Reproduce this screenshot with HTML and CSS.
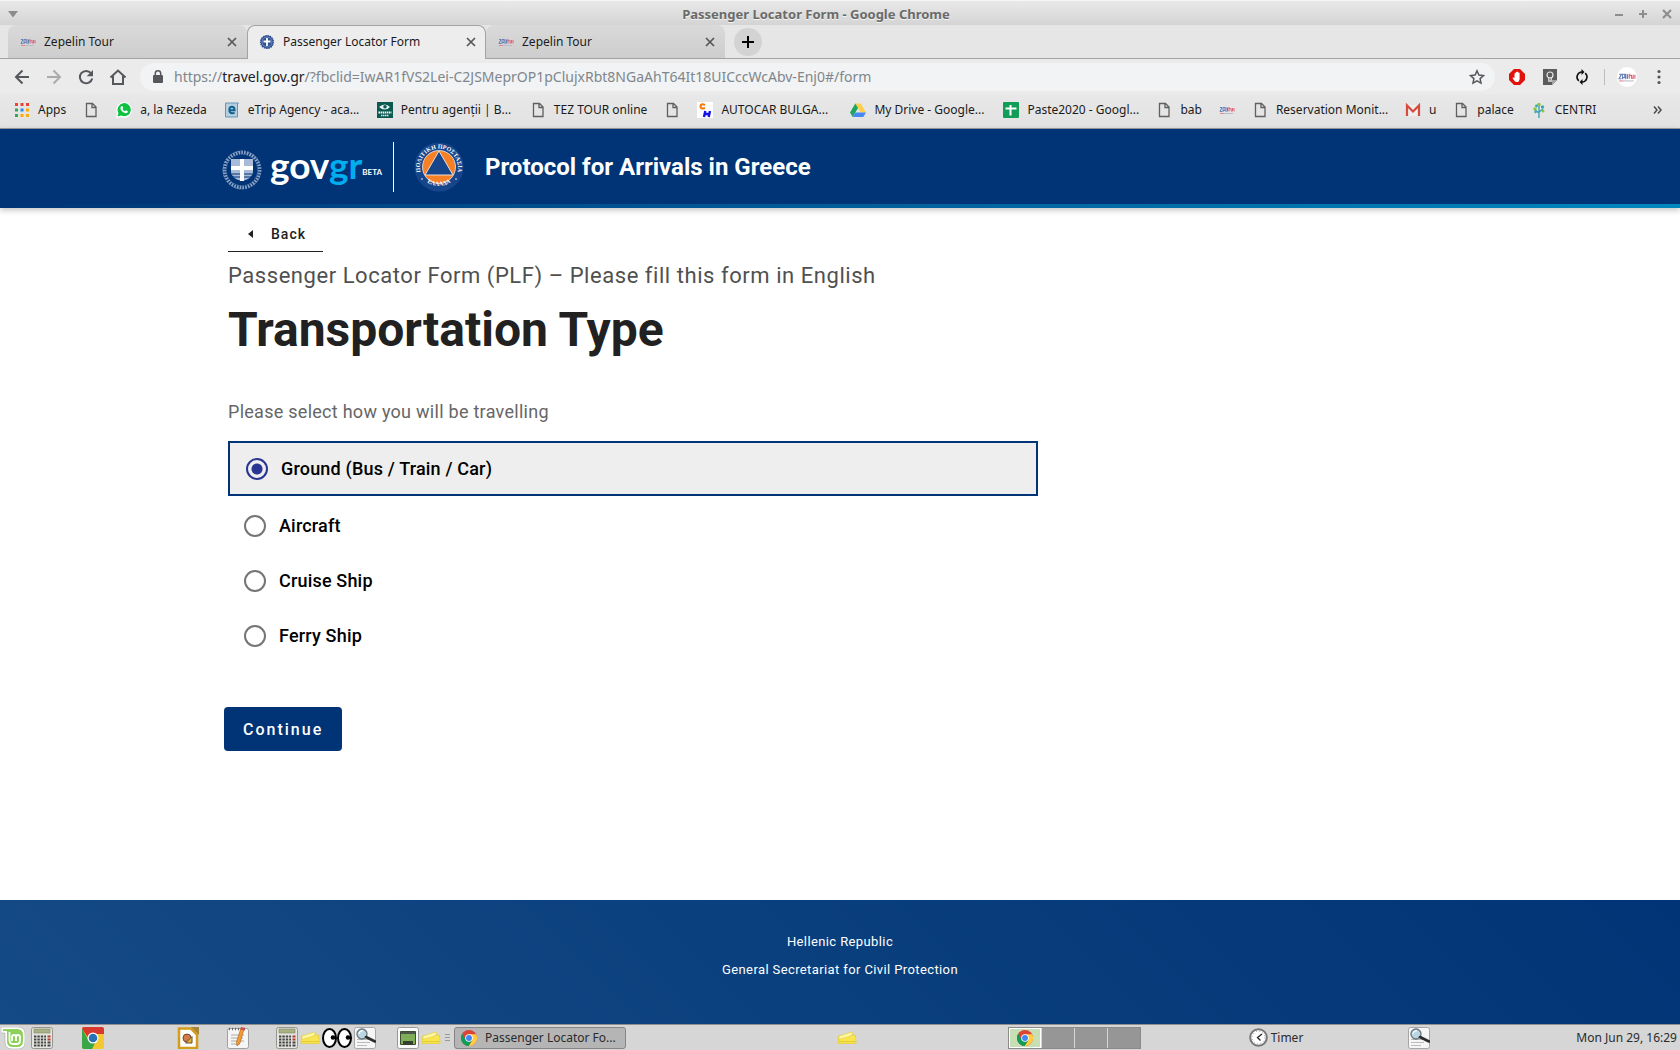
FILE: index.html
```html
<!DOCTYPE html>
<html lang="en">
<head>
    <meta charset="UTF-8">
    <meta name="viewport" content="width=device-width, initial-scale=1.0">
    <title>Passenger Locator Form</title>
    <link rel="stylesheet" href="styles.css">
</head>
<body>
    <!-- Shared icons -->
    <svg class="sprite" aria-hidden="true">
        <symbol id="i-page" viewBox="0 0 16 16"><path d="M3.5 1.5h6l3.500 3.500v9.500h-9.500zM9 1.500v4h4" fill="none" stroke="#5f5f5f" stroke-width="1.300"/></symbol>
        <symbol id="i-zepelin" viewBox="0 0 16 16">
            <path d="M1 5.500h2l-2 4h2M4 10V5.500h2v3H4M7 5v5M8.500 5.500v4" fill="none" stroke="#6780b8" stroke-width="1"/>
            <path d="M10 5v4.500M9.500 6.500h2M12 6v3h1.500V6M15 9.500V6" fill="none" stroke="#d9677b" stroke-width="1"/>
            <path d="M1 11.500h4" stroke="#e48a93"/><path d="M5 11.500h9" stroke="#b9bdc9"/>
        </symbol>
        <symbol id="i-close" viewBox="0 0 10 10"><path d="M1 1l8 8M9 1L1 9" stroke="#565656" stroke-width="1.700"/></symbol>
        <symbol id="i-chrome" viewBox="0 0 20 20">
            <circle cx="10" cy="10" r="10" fill="#db4437"/>
            <path d="M10 5.300h8.800A10 10 0 0 1 9.500 20l4.600-7.600z" fill="#ffcd40"/>
            <path d="M1.500 4.700A10 10 0 0 0 9.500 20l4.600-7.600-8.200 0z" fill="#0f9d58"/>
            <circle cx="10" cy="10" r="4.700" fill="#fff"/><circle cx="10" cy="10" r="3.700" fill="#4285f4"/>
        </symbol>
        <symbol id="i-calc" viewBox="0 0 22 22">
            <rect x=".5" y=".5" width="21" height="21" rx="2" fill="#e4e4e0" stroke="#96968f"/>
            <rect x="3" y="2" width="16" height="4" fill="#a9b286" stroke="#7d8560" stroke-width=".6"/>
            <path d="M3 9.500h12M3 12.500h12M3 15.500h12M3 18.500h12" stroke="#444" stroke-width="2" stroke-dasharray="2.400 1"/>
            <path d="M16.500 9.500h3M16.500 12.500h3" stroke="#b5392e" stroke-width="2"/><path d="M16.500 15.500h3M16.500 18.500h3" stroke="#444" stroke-width="2"/>
        </symbol>
        <symbol id="i-note" viewBox="0 0 20 16">
            <path d="M1.500 6L18.500 5l.5 8.500H1z" fill="#f8e550" stroke="#e6cf3c" stroke-width=".8"/>
            <path d="M2 6l11-3.500 3-.5-2 4L2 9.500z" fill="#fff7a0" stroke="#e3cf48" stroke-width=".7"/>
            <path d="M1.500 11.500h17" stroke="#dcc52f" stroke-width=".8"/>
        </symbol>
        <symbol id="i-search" viewBox="0 0 22 22">
            <rect x=".5" y=".5" width="21" height="21" rx="2" fill="#f6f6f6" stroke="#a6a6a6"/>
            <path d="M3 12.500h12M3 15.500h13M3 18.500h10" stroke="#bbb"/>
            <circle cx="8" cy="7" r="5" fill="#b9d6e2" stroke="#68777e" stroke-width="1.300"/>
            <path d="M5 7a3.500 3.500 0 0 1 4-3.200" fill="none" stroke="#fff" stroke-width="1.200"/>
            <path d="M12 10l9 4.500" stroke="#2d2d2d" stroke-width="2.600" stroke-linecap="round"/>
        </symbol>
    </svg>

    <div class="titlebar">
        <button class="win-button" aria-label="Window menu"><svg width="10" height="7" viewBox="0 0 10 7"><path d="M0 0h10L5 6.500z" fill="#8c8c8c"/></svg></button>
        <div class="window-title">Passenger Locator Form - Google Chrome</div>
        <div class="win-controls">
            <button class="win-button" aria-label="Minimize"><svg width="10" height="10"><path d="M1 6h8" stroke="#8e8e8e" stroke-width="2"/></svg></button>
            <button class="win-button" aria-label="Maximize"><svg width="10" height="10"><path d="M1 5h8M5 1v8" stroke="#8e8e8e" stroke-width="2"/></svg></button>
            <button class="win-button" aria-label="Close"><svg width="10" height="10"><path d="M1 1l8 8M9 1L1 9" stroke="#8e8e8e" stroke-width="2.200"/></svg></button>
        </div>
    </div>

    <div class="tabs">
        <div class="tab">
            <svg class="icon"><use href="#i-zepelin"/></svg>
            <a class="tab-title" href="#">Zepelin Tour</a>
            <button class="tab-close" aria-label="Close tab"><svg width="10" height="10"><use href="#i-close"/></svg></button>
        </div>
        <div class="tab active">
            <svg class="icon" viewBox="0 0 16 16"><circle cx="8" cy="8" r="6.400" fill="#2f4f93" stroke="#2f4f93" stroke-width="1.400" stroke-dasharray="1.500 .8"/><circle cx="8" cy="8" r="5" fill="none" stroke="#8ba0cc" stroke-width=".7"/><path d="M8 4v8M4.500 7.500h7" stroke="#fff" stroke-width="1.800"/></svg>
            <a class="tab-title" href="#">Passenger Locator Form</a>
            <button class="tab-close" aria-label="Close tab"><svg width="10" height="10"><use href="#i-close"/></svg></button>
        </div>
        <div class="tab">
            <svg class="icon"><use href="#i-zepelin"/></svg>
            <a class="tab-title" href="#">Zepelin Tour</a>
            <button class="tab-close" aria-label="Close tab"><svg width="10" height="10"><use href="#i-close"/></svg></button>
        </div>
        <button class="new-tab" aria-label="New tab"><svg width="12" height="12"><path d="M0 6h12M6 0v12" stroke="#000" stroke-width="2"/></svg></button>
    </div>

    <div class="toolbar">
        <button class="tool" aria-label="Back"><svg width="16" height="16"><path d="M15 8H2M8.500 1.500L2 8l6.500 6.500" fill="none" stroke="#54575b" stroke-width="2"/></svg></button>
        <button class="tool" aria-label="Forward"><svg width="16" height="16"><path d="M1 8h13M7.500 1.500L14 8l-6.500 6.500" fill="none" stroke="#a9abad" stroke-width="2"/></svg></button>
        <button class="tool" aria-label="Reload"><svg width="16" height="16"><path d="M13 4.200A6.200 6.200 0 1 0 14.200 9.500" fill="none" stroke="#54575b" stroke-width="2"/><path d="M15 1v6.300H8.700z" fill="#54575b"/></svg></button>
        <button class="tool" aria-label="Home"><svg width="18" height="16"><path d="M1.500 8.500L9 1.500l7.500 7M4 7v8h10V7" fill="none" stroke="#54575b" stroke-width="2"/></svg></button>
        <div class="omnibox">
            <svg width="10" height="14" viewBox="0 0 10 14"><rect y="5" width="10" height="8" rx="1" fill="#54575b"/><path d="M2.300 5V3.500a2.700 2.700 0 0 1 5.400 0V5" fill="none" stroke="#54575b" stroke-width="1.500"/></svg>
            <div class="url">https://<span class="host">travel.gov.gr</span>/?fbclid=IwAR1fVS2Lei-C2JSMeprOP1pClujxRbt8NGaAhT64It18UICccWcAbv-Enj0#/form</div>
            <button class="star" aria-label="Bookmark this page"><svg width="16" height="16"><path d="M8 1.800l1.900 4.200 4.600.5-3.400 3.100.9 4.500L8 11.800l-4 2.300.9-4.500L1.500 6.500l4.600-.5z" fill="none" stroke="#54575b" stroke-width="1.500"/></svg></button>
        </div>
        <div class="extensions">
            <svg width="16" height="16" viewBox="0 0 16 16"><path d="M5 0h6l5 5v6l-5 5H5l-5-5V5z" fill="#e0120d"/><path d="M4.500 8.500l1 .5V4.500q.6-.9 1.200 0V3.200q.7-.9 1.300 0v-.3q.7-.8 1.300 0v1q.8-.7 1.300.2v5.800q-.3 3-2.600 3.200-2 0-2.800-1.500L3.500 9q.2-.8 1-.5z" fill="#fff"/></svg>
            <svg width="16" height="16" viewBox="0 0 16 16"><path d="M1 0h14v11l-5 5H1z" fill="#5c5c5c"/><path d="M10 16v-5h5z" fill="#a6a6a6"/><circle cx="8" cy="6" r="3" fill="none" stroke="#e8e8e8" stroke-width="1.200"/><path d="M6.800 8.500v3.700h2.400V8.500" fill="none" stroke="#e8e8e8" stroke-width="1.200"/></svg>
            <svg width="14" height="16" viewBox="0 0 14 16"><path d="M3.800 11.800A5 5 0 0 1 7 3M10.200 4.200A5 5 0 0 1 7 13" fill="none" stroke="#111" stroke-width="1.600"/><path d="M6.500 0v6l3-3zM7.500 10v6l-3-3z" fill="#111"/></svg>
        </div>
        <div class="avatar"><svg width="18" height="18"><use href="#i-zepelin"/></svg></div>
        <button class="menu" aria-label="Menu"><svg width="4" height="16"><g fill="#54575b"><circle cx="2" cy="2.500" r="1.600"/><circle cx="2" cy="8" r="1.600"/><circle cx="2" cy="13.500" r="1.600"/></g></svg></button>
    </div>

    <nav class="bookmarks">
        <a href="#"><svg class="icon" viewBox="0 0 16 16"><path d="M1 1h3v3H1zM6.500 1h3v3h-3zM12 1h3v3h-3z" fill="#ea4335"/><path d="M1 6.500h3v3H1zM1 12h3v3H1z" fill="#34a853"/><path d="M6.500 6.500h3v3h-3z" fill="#2f86f6"/><path d="M12 6.500h3v3h-3zM6.500 12h3v3h-3zM12 12h3v3h-3z" fill="#fbab05"/></svg>Apps</a>
        <a href="#" aria-label="Page"><svg class="icon"><use href="#i-page"/></svg></a>
        <a href="#"><svg class="icon" viewBox="0 0 16 16"><path d="M0 16l1-5a7.800 7.800 0 1 1 4 4z" fill="#fff"/><path d="M1.500 14.500l.9-3.600a6.600 6.600 0 1 1 2.800 2.700z" fill="#0dc143"/><path d="M5.200 4.200l1.200-.1.800 2-.7.900q.8 1.700 2.500 2.300l.9-1 2 1q0 1.900-2 2-3.500-.2-5.400-4.200-.3-1.900.7-2.900z" fill="#fff"/></svg>a, la Rezeda</a>
        <a href="#"><svg class="icon" viewBox="0 0 16 16"><path d="M1.500 1h13l-1 1v13H1.500z" fill="#b4d0e2" stroke="#6795b3"/><path d="M5 8.300h5.600Q10.600 4.800 8 4.800T5.300 8q0 3.200 3 3.200 1.300 0 2.200-.7" fill="none" stroke="#12618f" stroke-width="1.900"/></svg><span class="cut">eTrip Agency - aca...</span></a>
        <a href="#"><svg class="icon" viewBox="0 0 16 16"><path d="M0 0h16v16H0z" fill="#0b5a50"/><path d="M2 5q6-5 11 0-5 5-11 0z" fill="#e9f3f0"/><circle cx="8" cy="4.800" r="1.800" fill="#0b5a50"/><path d="M1.500 10.500h13" stroke="#fff" stroke-width="2" stroke-dasharray="1.500 .6"/><path d="M4 13.500h8" stroke="#d7e7e4" stroke-width="1.600" stroke-dasharray="1.500 .5"/></svg><span class="cut">Pentru agenții | B...</span></a>
        <a href="#"><svg class="icon"><use href="#i-page"/></svg>TEZ TOUR online</a>
        <a href="#" aria-label="Page"><svg class="icon"><use href="#i-page"/></svg></a>
        <a href="#"><svg class="icon" viewBox="0 0 16 16"><path d="M0 0h16v16H0z" fill="#fff"/><path d="M8 3Q4 1 3.500 4.500 4 7.500 8 6" fill="none" stroke="#f47b10" stroke-width="2.200"/><path d="M7 15l1.300-6M11.700 15L13 9M8 12h4.500" stroke="#1212e8" stroke-width="2.400"/></svg><span class="cut">AUTOCAR BULGA...</span></a>
        <a href="#"><svg class="icon" viewBox="0 0 16 16"><path d="M5.300 1.500h5.400L16 10.500h-5.300z" fill="#ffcf4a"/><path d="M5.300 1.500L8 6 2.700 15 0 10.500z" fill="#1fa463"/><path d="M5.300 10.500H16L13.300 15H2.700z" fill="#4688f4"/></svg><span class="cut">My Drive - Google...</span></a>
        <a href="#"><svg class="icon" viewBox="0 0 16 16"><rect width="16" height="16" rx="1" fill="#109d58"/><path d="M2.500 6.500h11M7.500 3v10.500" stroke="#fff" stroke-width="2"/></svg><span class="cut">Paste2020 - Googl...</span></a>
        <a href="#"><svg class="icon"><use href="#i-page"/></svg>bab</a>
        <a href="#" aria-label="Zepelin"><svg class="icon"><use href="#i-zepelin"/></svg></a>
        <a href="#"><svg class="icon"><use href="#i-page"/></svg><span class="cut">Reservation Monit...</span></a>
        <a href="#"><svg class="icon" viewBox="0 0 16 16"><path d="M1 3h14v11H1z" fill="#eee"/><path d="M2 14V3.500l6 6 6-6V14" fill="none" stroke="#d54b3d" stroke-width="2.200"/></svg>u</a>
        <a href="#"><svg class="icon"><use href="#i-page"/></svg>palace</a>
        <a href="#"><svg class="icon" viewBox="0 0 16 16"><path d="M8 16V4M8 11L4 8M8 10l4-3" fill="none" stroke="#2d9fb5" stroke-width="1.300"/><g fill="#8cc63f"><circle cx="4" cy="7" r="1.800"/><circle cx="8" cy="2.500" r="1.700"/><circle cx="12" cy="9" r="1.500"/></g><g fill="#38a7b8"><circle cx="5.500" cy="4" r="1.400"/><circle cx="11.500" cy="5" r="1.700"/><circle cx="4.500" cy="10" r="1.200"/></g></svg>CENTRI</a>
        <button class="more" aria-label="More bookmarks"><svg width="9" height="8"><path d="M1 .5L4 4 1 7.500M5 .5L8 4 5 7.500" fill="none" stroke="#4b4b4b" stroke-width="1.500"/></svg></button>
    </nav>

    <header class="site-header">
        <div class="container brand">
            <svg class="emblem" viewBox="0 0 40 40">
                <circle cx="20" cy="20" r="17.500" fill="none" stroke="#8ba2c7" stroke-width="3.500" stroke-dasharray="1.700 1.100"/>
                <circle cx="20" cy="20" r="19" fill="none" stroke="#6d89b5" stroke-width="1" stroke-dasharray="2 1.500"/>
                <circle cx="20" cy="20" r="15.600" fill="none" stroke="#5676a9" stroke-width="1" stroke-dasharray="1 1"/>
                <path d="M9 9h22v13q-1 7-11 9Q10 29 9 22z" fill="#a9bbd6"/>
                <path d="M10 24h20M11 27h18" stroke="#003476"/>
                <path d="M20 9v22M9 18h22" stroke="#fff" stroke-width="4"/>
            </svg>
            <div class="logo">gov<span class="logo-gr">gr</span></div>
            <div class="beta">BETA</div>
            <svg class="civil" viewBox="0 0 50 50">
                <circle cx="25" cy="25" r="24.500" fill="#17458b"/>
                <circle cx="25" cy="25" r="16.500" fill="#f58026" stroke="#e9edf5" stroke-width=".8"/>
                <path d="M25 9L39 33H11z" fill="#17458b" stroke="#f0dccf" stroke-width="1"/>
                <path id="ring-top" d="M6.500 30A19 19 0 1 1 43.500 30" fill="none"/>
                <path id="ring-bottom" d="M8 36A22.500 22.500 0 0 0 42 36" fill="none"/>
                <text class="ring-text"><textPath href="#ring-top" startOffset="50%">ΠΟΛΙΤΙΚΗ ΠΡΟΣΤΑΣΙΑ</textPath></text>
                <text class="ring-text"><textPath href="#ring-bottom" startOffset="50%">ΕΛΛΑΔΑ</textPath></text>
                <circle cx="8" cy="37" r=".8" fill="#fff"/><circle cx="42" cy="37" r=".8" fill="#fff"/>
            </svg>
            <div class="site-title">Protocol for Arrivals in Greece</div>
        </div>
    </header>

    <main class="content">
        <form class="container">
            <button type="button" class="back"><svg width="6" height="8"><path d="M5 0v8L0 4z" fill="#212121"/></svg>Back</button>
            <p class="subtitle">Passenger Locator Form (PLF) – Please fill this form in English</p>
            <h1>Transportation Type</h1>
            <fieldset>
                <legend>Please select how you will be travelling</legend>
                <label class="option"><input type="radio" name="transport" checked>Ground (Bus / Train / Car)</label>
                <label class="option"><input type="radio" name="transport">Aircraft</label>
                <label class="option"><input type="radio" name="transport">Cruise Ship</label>
                <label class="option"><input type="radio" name="transport">Ferry Ship</label>
            </fieldset>
            <button type="button" class="continue">Continue</button>
        </form>
    </main>

    <footer class="site-footer">
        <div>Hellenic Republic</div>
        <div>General Secretariat for Civil Protection</div>
    </footer>

    <div class="taskbar">
        <svg class="mint" width="24" height="22" viewBox="0 0 24 22"><path d="M0 0h17q7 0 7 7v8q0 7-7 7h-6q-7 0-7-7V6H0z" fill="#fff" stroke="#aaa" stroke-width=".6"/><path d="M2 2h14q6 0 6 6v6q0 6-6 6h-4q-6 0-6-6V4H2z" fill="#8ed05b"/><path d="M8.500 5v8q0 4 3.500 4h4q3 0 3-3.500V10q0-2-2-2t-2 2v4M15 10q0-2-2-2t-2 2v4" fill="none" stroke="#fff" stroke-width="1.800"/></svg>
        <svg class="app calc" width="22" height="22"><use href="#i-calc"/></svg>
        <svg class="app chrome" width="22" height="22" viewBox="0 0 22 22"><rect width="22" height="22" rx="2" fill="#f3c831"/><path d="M0 2q0-2 2-2h18q2 0 2 2v5H11l-4 5z" fill="#d8382d"/><path d="M0 2l7 12 6 2-3 6H2q-2 0-2-2z" fill="#3aa648"/><circle cx="11" cy="11" r="5.500" fill="#fff"/><circle cx="11" cy="11" r="4.300" fill="#2a70b4"/></svg>
        <svg class="app office" width="22" height="22" viewBox="0 0 22 22"><path d="M2 1.500h12l6 6V21H2z" fill="#fff" stroke="#d49d1b" stroke-width="2.500"/><path d="M14 0h8v8z" fill="#a88638"/><circle cx="10" cy="11" r="4" fill="#d57a48" stroke="#6d4935"/><path d="M8.500 16H15V9.500z" fill="#e3b23b" stroke="#695426"/></svg>
        <svg class="app editor" width="22" height="22" viewBox="0 0 22 22"><rect x=".5" y="1.500" width="21" height="20" rx="2" fill="#f5f5f5" stroke="#a0a0a0"/><path d="M2 2h18" stroke="#666" stroke-width="2.500" stroke-dasharray="1 2"/><path d="M4 8h13M4 11h12M4 14h13M4 17h9" stroke="#aaa"/><path d="M14 1l3 1-4 14-3 3-.5-4z" fill="#f29a2e" stroke="#a86218" stroke-width=".6"/><path d="M14 0l4 1-.6 2.500-4-1z" fill="#d74b4b"/></svg>
        <div class="tray">
            <svg width="22" height="22"><use href="#i-calc"/></svg>
            <svg width="20" height="16"><use href="#i-note"/></svg>
            <svg width="30" height="22" viewBox="0 0 30 22"><g fill="#fff" stroke="#000" stroke-width="2"><ellipse cx="7.500" cy="11" rx="6.500" ry="9"/><ellipse cx="22.500" cy="11" rx="6.500" ry="9"/></g><circle cx="11" cy="10.500" r="2.300"/><circle cx="26" cy="10.500" r="2.300"/></svg>
            <svg width="22" height="22"><use href="#i-search"/></svg>
        </div>
        <svg class="app show" width="22" height="22" viewBox="0 0 22 22"><rect x=".5" y=".5" width="21" height="21" rx="2" fill="#fafafa" stroke="#999"/><path d="M3.500 4.500h15v13h-15z" fill="#7fae58" stroke="#3e4c33"/><path d="M4 5h14v2H4z" fill="#4e554a"/><path d="M6 14h10v4H6z" fill="#35402d"/></svg>
        <svg class="note" width="20" height="16"><use href="#i-note"/></svg>
        <svg class="handle" width="5" height="8"><path d="M0 .5h5M0 3.500h5M0 6.500h5" stroke="#999"/></svg>
        <button class="task"><svg width="16" height="16"><use href="#i-chrome"/></svg>Passenger Locator Fo...</button>
        <svg class="note desk-note" width="20" height="16"><use href="#i-note"/></svg>
        <div class="pager">
            <button class="desk current" aria-label="Workspace 1"><svg width="16" height="16"><use href="#i-chrome"/></svg></button>
            <button class="desk" aria-label="Workspace 2"></button>
            <button class="desk" aria-label="Workspace 3"></button>
            <button class="desk" aria-label="Workspace 4"></button>
        </div>
        <div class="timer"><svg width="19" height="19" viewBox="0 0 19 19"><circle cx="9.500" cy="9.500" r="8.300" fill="#fff" stroke="#777" stroke-width="2"/><circle cx="9.500" cy="9.500" r="6.300" fill="none" stroke="#999" stroke-width="1" stroke-dasharray="1 2.300"/><path d="M13 6L8.500 9.500l3 3" fill="none" stroke="#222" stroke-width="1.300"/></svg>Timer</div>
        <svg class="app finder" width="22" height="22"><use href="#i-search"/></svg>
        <div class="clock">Mon Jun 29, 16:29</div>
    </div>
</body>
</html>
```
FILE: styles.css
```css
:root {
    --navy: #003476;
    --ink: #212121;
    --chrome-font: "Noto Sans", "Open Sans", sans-serif;
    --page-font: Roboto, sans-serif;
}

* {
    box-sizing: border-box;
}

body {
    display: flex;
    flex-direction: column;
    min-height: 100vh;
    margin: 0;
    background: #fff;
    font-family: var(--chrome-font);
    font-size: 12px;
    color: #1b1b1b;
}

a {
    color: inherit;
    text-decoration: none;
}

button {
    padding: 0;
    border: 0;
    background: none;
    color: inherit;
    font: inherit;
}

svg {
    display: block;
    flex: none;
}

.sprite {
    position: absolute;
    width: 0;
    height: 0;
}

.icon {
    width: 16px;
    height: 16px;
}

/* Window title bar */
.titlebar {
    display: flex;
    align-items: center;
    height: 25px;
    padding: 2px 8px 0;
    background: linear-gradient(#e9e9e9, #d4d4d4);
    border-top: 1px solid #f5f5f5;
}

.window-title {
    flex: 1;
    text-align: center;
    font-size: 13px;
    font-weight: bold;
    color: #6a6a6a;
    text-shadow: 0 1px 0 #f4f4f4;
}

.win-controls {
    display: flex;
    gap: 14px;
}

/* Tab strip */
.tabs {
    display: flex;
    height: 34px;
    padding-left: 8px;
    background: #e6e6e6;
    border-bottom: 1px solid #a3a3a3;
}

.tab {
    display: flex;
    align-items: center;
    width: 239px;
    padding: 0 10px 0 12px;
    background: linear-gradient(#dadada, #cdcdcd);
    border-radius: 8px 8px 0 0;
}

.tab.active {
    height: 34px;
    padding: 0 9px 2px 11px;
    background: #ededed;
    border: 1px solid #a3a3a3;
    border-bottom: 0;
}

.tab-title {
    flex: 1;
    padding-left: 8px;
}

.new-tab {
    display: flex;
    align-items: center;
    justify-content: center;
    align-self: center;
    width: 28px;
    height: 28px;
    margin-left: 9px;
    border-radius: 50%;
    background: #d3d3d3;
}

/* Address bar */
.toolbar {
    display: flex;
    align-items: center;
    height: 35px;
    padding: 0 19px 0 6px;
    background: #ebebeb;
}

.tool {
    display: flex;
    justify-content: center;
    width: 32px;
}

.omnibox {
    display: flex;
    align-items: center;
    flex: 1;
    height: 28px;
    margin-left: 6px;
    padding: 0 10px 0 13px;
    border-radius: 14px;
    background: #f1f3f4;
}

.url {
    flex: 1;
    padding-left: 11px;
    font-size: 14px;
    color: #80868b;
}

.host {
    color: #202124;
}

.extensions {
    display: flex;
    align-items: center;
    gap: 17px;
    height: 16px;
    padding: 0 15px 0 14px;
    border-right: 1px solid #bcbcbc;
}

.avatar {
    display: flex;
    align-items: center;
    justify-content: center;
    width: 20px;
    height: 20px;
    margin: 0 20px 0 12px;
    border-radius: 50%;
    background: #fff;
}

/* Bookmarks bar */
.bookmarks {
    display: flex;
    align-items: center;
    gap: 17px;
    height: 35px;
    padding: 0 18px 3px 14px;
    background: linear-gradient(#e8e8e8, #e2e2e2);
    border-bottom: 1px solid #9b9b9b;
    white-space: nowrap;
}

.bookmarks a {
    display: flex;
    align-items: center;
    gap: 8px;
}

.cut {
    width: 112px;
}

.more {
    margin-left: auto;
}

/* Site header */
.site-header {
    background: var(--navy);
    border-bottom: 4px solid;
    border-image: linear-gradient(90deg, #003476, #0087be) 1;
    box-shadow: 0 2px 6px rgba(0, 0, 0, 0.25);
    font-family: var(--page-font);
    color: #fff;
}

.container {
    width: calc(100% - 48px);
    max-width: 1224px;
    margin: 0 auto;
}

.brand {
    display: flex;
    align-items: center;
    height: 75px;
}

.emblem {
    width: 40px;
    height: 40px;
    margin: 6px 8px 0 -6px;
}

.logo {
    padding-bottom: 4px;
    font: bold 37px/40px Lato, sans-serif;
}

.logo-gr {
    color: #00aeef;
}

.beta {
    display: flex;
    align-items: center;
    height: 50px;
    padding: 10px 11px 0 0;
    border-right: 1px solid #fff;
    font: bold 8px Lato, sans-serif;
}

.civil {
    width: 50px;
    height: 50px;
    margin: 0 21px 0 20px;
}

.ring-text {
    fill: #fff;
    font: bold 6px "Liberation Serif", serif;
    text-anchor: middle;
}

.site-title {
    font-size: 24px;
    font-weight: bold;
}

/* Form */
.content {
    flex: 1;
    font-family: var(--page-font);
    color: var(--ink);
}

.back {
    display: flex;
    align-items: center;
    gap: 17px;
    height: 36px;
    margin-top: 8px;
    padding: 0 17px 0 20px;
    border-bottom: 1px solid var(--ink);
    font-size: 14px;
    font-weight: 500;
    letter-spacing: 1px;
}

.subtitle {
    margin: 8px 0 0;
    font-size: 22px;
    line-height: 32px;
    letter-spacing: 0.025em;
    color: #505050;
}

h1 {
    margin: 8px 0 0;
    font-size: 48px;
    line-height: 60px;
}

fieldset {
    max-width: 810px;
    margin: 40px 0 0;
    padding: 0;
    border: 0;
}

legend {
    padding: 0 0 17px;
    font-size: 18px;
    line-height: 24px;
    letter-spacing: 0.015em;
    color: #666;
}

.option {
    display: flex;
    align-items: center;
    height: 55px;
    padding: 0 16px;
    font-size: 18px;
    font-weight: 500;
    letter-spacing: 0.01em;
    color: #000;
}

.option:has(input:checked) {
    margin-bottom: 2px;
    border: 2px solid var(--navy);
    background: #eee;
}

.option input {
    appearance: none;
    width: 22px;
    height: 22px;
    margin: 0 13px 0 0;
    border: 2px solid #757575;
    border-radius: 50%;
}

.option input:checked {
    border-color: #283593;
    background: radial-gradient(circle, #283593 5px, transparent 6px);
}

.continue {
    height: 44px;
    margin: 44px 0 0 -4px;
    padding: 0 19px;
    border-radius: 4px;
    background: var(--navy);
    font-size: 16px;
    font-weight: 500;
    letter-spacing: 2px;
    color: #fff;
}

/* Site footer */
.site-footer {
    height: 124px;
    padding-top: 28px;
    background: linear-gradient(45deg, #144a85, var(--navy));
    font-family: var(--page-font);
    font-size: 13px;
    line-height: 28px;
    letter-spacing: 0.03em;
    text-align: center;
    color: #fff;
}

/* Desktop panel */
.taskbar {
    display: flex;
    align-items: center;
    height: 26px;
    padding: 0 3px 0 1px;
    background: #d6d6d6;
    border-top: 1px solid #8f8f8f;
    color: #2b2b2b;
}

.calc {
    margin-left: 6px;
}

.chrome {
    margin-left: 29px;
}

.office {
    margin-left: 73px;
}

.editor {
    margin-left: 28px;
}

.tray {
    display: flex;
    align-items: center;
    gap: 2px;
    margin-left: 27px;
}

.show {
    margin: 0 2px 0 21px;
}

.handle {
    margin: 0 4px;
}

.task {
    display: flex;
    align-items: center;
    gap: 8px;
    width: 172px;
    height: 22px;
    padding-left: 6px;
    border: 1px solid #858585;
    border-radius: 3px;
    background: #b5b5b5;
}

.desk-note {
    margin-left: 211px;
}

.pager {
    display: flex;
    gap: 1px;
    height: 22px;
    margin-left: auto;
    border: 1px solid #8a8a8a;
    background: #d6d6d6;
}

.desk {
    width: 32px;
    background: #969696;
}

.desk.current {
    display: flex;
    align-items: center;
    justify-content: center;
    border: 1px solid #fff;
    background: #c8dfb5;
}

.timer {
    display: flex;
    align-items: center;
    gap: 3px;
    margin-left: 108px;
}

.finder {
    margin-left: 105px;
}

.clock {
    margin-left: 146px;
}
```
